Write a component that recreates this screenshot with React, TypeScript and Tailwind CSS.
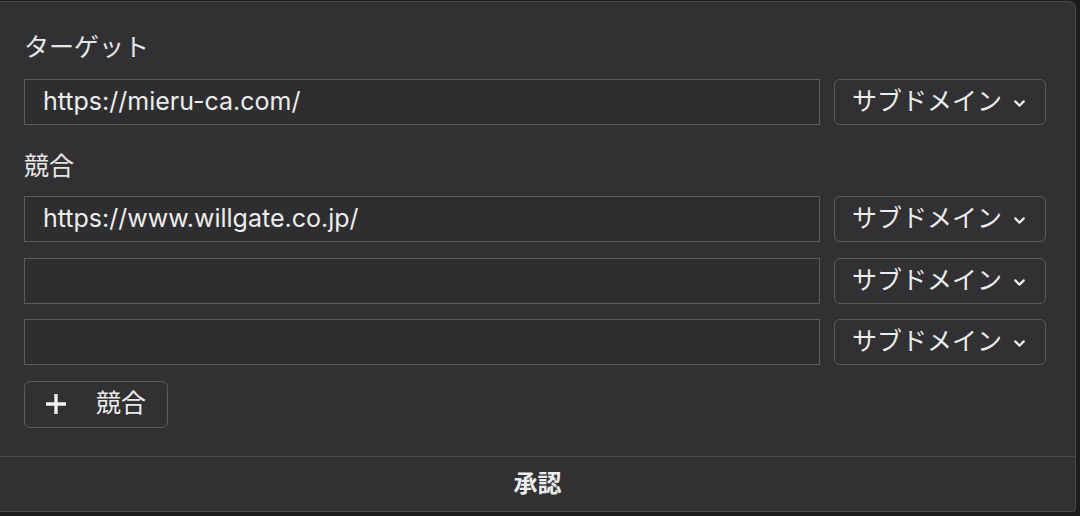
import { ChevronDown } from "lucide-react";

const font = { fontFamily: "Inter, 'Noto Sans CJK JP', sans-serif" };

const DomainRow = ({ value }: { value: string }) => (
  <div className="flex gap-[14px]">
    <div className="flex h-[46px] w-[796px] items-center border border-[#5c5c5f] bg-[#2e2e30] px-[18px] text-[25px] text-[#ececec]">
      {value}
    </div>
    <button className="flex h-[46px] w-[212px] items-center justify-center gap-[9px] rounded-md border border-[#5c5c5f] text-[25px] text-[#ececec]">
      サブドメイン
      <ChevronDown className="mt-[3px] h-[17px] w-[17px]" strokeWidth={3} />
    </button>
  </div>
);

export default function App() {
  const competitors = ["https://www.willgate.co.jp/", "", ""];

  return (
    <div className="h-[516px] w-[1080px] overflow-hidden bg-[#1c1c1e]" style={font}>
      <div className="mt-[1px] flex h-[511px] w-[1076px] flex-col rounded-tr-lg rounded-br-sm border-t border-r border-b border-[#4a4a4d] bg-[#313133]">
        <div className="flex-1 pl-[24px] pt-[30px]">
          <div className="h-[30px] text-[25px] leading-[30px] text-[#e6e6e6]">ターゲット</div>
          <div className="mt-[17px]">
            <DomainRow value="https://mieru-ca.com/" />
          </div>

          <div className="mt-[26px] h-[30px] text-[25px] leading-[30px] text-[#e6e6e6]">競合</div>
          <div className="mt-[15px] flex flex-col gap-[15.5px]">
            {competitors.map((c, i) => (
              <DomainRow key={i} value={c} />
            ))}
          </div>

          <button className="mt-[15.5px] flex h-[47px] w-[144px] items-center gap-[28px] rounded-md border border-[#5c5c5f] pl-[19px] text-[25px] text-[#ececec]">
            <svg width="24" height="24" viewBox="0 0 24 24" className="text-[#f0f0f0]">
              <path d="M12 2v20M2 12h20" stroke="currentColor" strokeWidth="3.4" />
            </svg>
            競合
          </button>
        </div>

        <div className="flex h-[55px] items-center justify-center border-t border-[#48484b] text-[24px] font-bold text-[#ececec]">
          承認
        </div>
      </div>
    </div>
  );
}
